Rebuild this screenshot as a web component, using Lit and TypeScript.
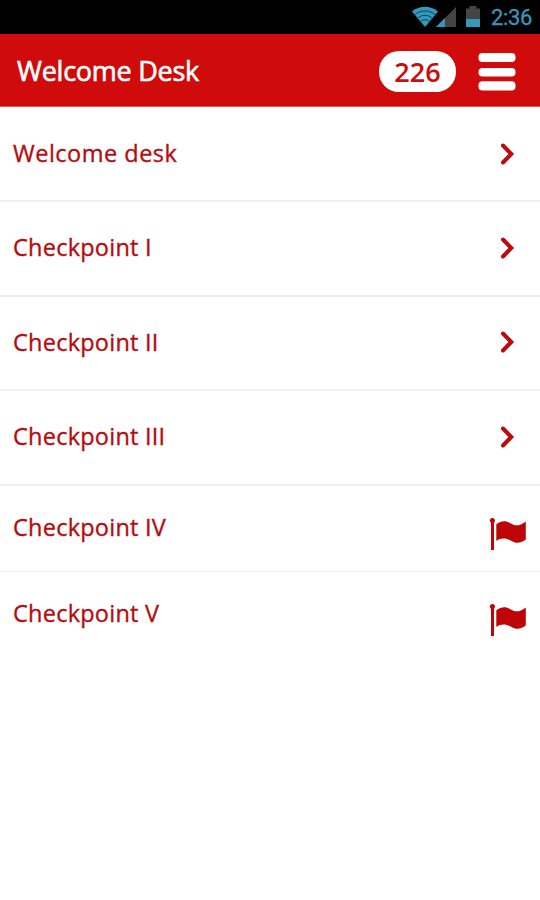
import { LitElement, html, css } from "lit";
import { customElement } from "lit/decorators.js";
import { classMap } from "lit/directives/class-map.js";

interface Stop {
  label: string;
  spacing: number;
  flagged?: boolean;
}

const stops: Stop[] = [
  { label: "Welcome desk", spacing: 0.5 },
  { label: "Checkpoint I", spacing: 0.24 },
  { label: "Checkpoint II", spacing: 0.24 },
  { label: "Checkpoint III", spacing: 0.24 },
  { label: "Checkpoint IV", spacing: 0.24, flagged: true },
  { label: "Checkpoint V", spacing: 0.24, flagged: true },
];

@customElement("app-root")
export class AppRoot extends LitElement {
  static styles = css`
    :host {
      display: flex;
      flex-direction: column;
      height: 900px;
      background: #fff;
      font-family: "Open Sans", "Noto Sans", sans-serif;
      overflow: hidden;
    }
    svg { display: block; flex: none; }
    .status {
      display: flex;
      flex: none;
      height: 34px;
      box-sizing: border-box;
      background: #000;
      justify-content: flex-end;
      align-items: center;
      padding-right: 8px;
      color: #3498bd;
      font: 22px/34px Roboto, sans-serif;
      -webkit-text-stroke: 0.3px currentColor;
    }
    .clock { margin-left: 9px; letter-spacing: -0.35px; padding-top: 1px; }
    .bar {
      display: flex;
      flex: none;
      align-items: center;
      height: 73px;
      box-sizing: border-box;
      padding: 2px 24px 0 17px;
      background: #d00b0b;
      border-bottom: 1px solid #df5a58;
      color: #fff;
    }
    .title {
      flex: 1;
      font-size: 27px;
      letter-spacing: -0.25px;
      line-height: 40px;
      -webkit-text-stroke: 0.6px currentColor;
    }
    .count {
      width: 77px;
      height: 41px;
      border-radius: 20px;
      background: #fff;
      color: #c90c0c;
      font-size: 27px;
      font-weight: 600;
      line-height: 41px;
      text-align: center;
      margin-right: 22px;
    }
    .menu { margin-top: 2px; }
    .row {
      display: flex;
      flex: none;
      justify-content: space-between;
      align-items: center;
      box-sizing: border-box;
      height: 94.5px;
      padding: 0 25px 2px 13px;
      border-bottom: 2px solid #f0f0f0;
      color: #b50c0f;
      font-size: 23.5px;
      line-height: 32px;
      -webkit-text-stroke: 0.35px currentColor;
    }
    .row svg { margin-top: 1px; }
    .row:first-child { height: 95px; padding-bottom: 1px; }
    .row.flagged { height: 86px; padding: 0 13px 3px 13px; border-bottom-width: 1px; }
    .row.flagged svg { margin-top: 14px; }
    .row:last-child { border-bottom-color: transparent; }
  `;

  private chevron() {
    return html`<svg width="15" height="24" viewBox="0 0 15 24">
      <path d="M3 3.5L11.3 12L3 20.5" fill="none" stroke="#b90c0f" stroke-width="4" stroke-linecap="round" stroke-linejoin="miter" />
    </svg>`;
  }

  private flag() {
    return html`<svg width="38" height="34" viewBox="0 0 38 34" fill="#bd0508">
      <circle cx="3.4" cy="3.6" r="2.5" />
      <path d="M2 4H5V33H2Z" />
      <path d="M7.3 7.2C12 3.8 17 3.2 22 6.5C27 9.7 31 8.5 36.8 4.4V22.6C31 26.5 27 26.7 22.5 24C17 20.8 12 20.8 7.3 24Z" />
    </svg>`;
  }

  render() {
    return html`
      <div class="status">
        <svg width="70" height="34" viewBox="0 0 70 34">
          <path d="M0 11.5C7.5 5.3 18.5 5.3 26 11.5L13 27Z" fill="#3498bd" />
          <g fill="none" stroke="#0d4154" stroke-width="1">
            <path d="M2.8 14.7C9 9.7 17 9.7 23.2 14.7" />
            <path d="M5.7 18C10.3 14.4 15.7 14.4 20.3 18" />
            <path d="M8.5 21.5C11.5 19.2 14.5 19.2 17.5 21.5" />
          </g>
          <path d="M44 7V27H24Z" fill="#444" />
          <path d="M33 18V27H24Z" fill="#3498bd" />
          <path d="M57.5 6H64.5V8.5H68V19H54V8.5H57.5Z" fill="#444" />
          <path d="M54 19H68V27H54Z" fill="#3498bd" />
        </svg>
        <span class="clock">2:36</span>
      </div>
      <header class="bar">
        <span class="title">Welcome Desk</span>
        <span class="count">226</span>
        <svg class="menu" width="38" height="38" viewBox="0 0 38 38" fill="#fff">
          <rect x="0.5" y="0" width="37" height="9" rx="4" />
          <rect x="0.5" y="15" width="37" height="8.6" rx="4" />
          <rect x="0.5" y="28.3" width="37" height="9.3" rx="4" />
        </svg>
      </header>
      <main>
        ${stops.map(
          (s) => html`<div class=${classMap({ row: true, flagged: !!s.flagged })}>
            <span style="letter-spacing:${s.spacing}px">${s.label}</span>
            ${s.flagged ? this.flag() : this.chevron()}
          </div>`
        )}
      </main>
    `;
  }
}
